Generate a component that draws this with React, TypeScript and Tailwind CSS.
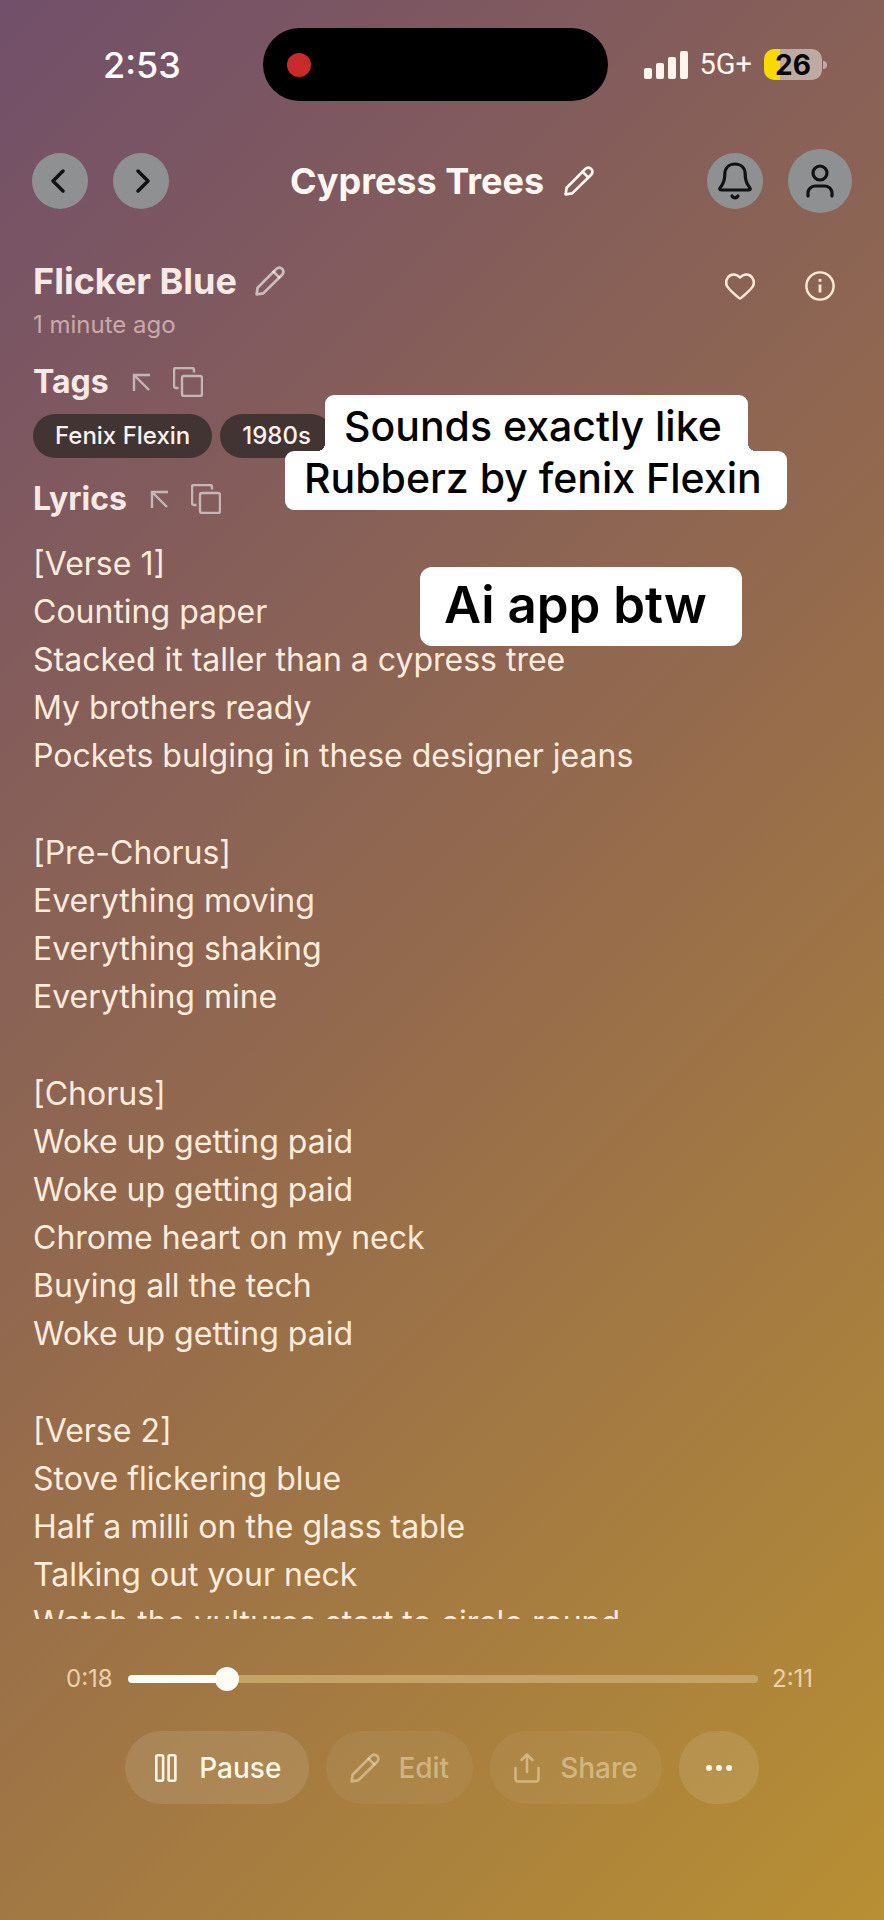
import { useState } from "react";

const STANZAS: string[][] = [
  [
    "[Verse 1]",
    "Counting paper",
    "Stacked it taller than a cypress tree",
    "My brothers ready",
    "Pockets bulging in these designer jeans",
  ],
  ["[Pre-Chorus]", "Everything moving", "Everything shaking", "Everything mine"],
  [
    "[Chorus]",
    "Woke up getting paid",
    "Woke up getting paid",
    "Chrome heart on my neck",
    "Buying all the tech",
    "Woke up getting paid",
  ],
  [
    "[Verse 2]",
    "Stove flickering blue",
    "Half a milli on the glass table",
    "Talking out your neck",
    "Watch the vultures start to circle round",
  ],
];

const TAGS = ["Fenix Flexin", "1980s"];
const DURATION = 131;

function formatTime(seconds: number) {
  const s = Math.floor(seconds);
  return `${Math.floor(s / 60)}:${String(s % 60).padStart(2, "0")}`;
}

function PencilIcon() {
  return (
    <svg viewBox="0 0 30 30" fill="none" stroke="currentColor" strokeWidth="2.7" strokeLinecap="round" strokeLinejoin="round" className="size-[30px]">
      <path d="M1.600 28.400 2.600 21.800 21.400 2.900a4.050 4.050 0 0 1 5.800 0 4.050 4.050 0 0 1 0 5.800L8.200 27.400Z" />
      <path d="m18.600 5.800 5.600 5.600" />
    </svg>
  );
}

function SectionHeading({ title }: { title: string }) {
  return (
    <div className="flex h-8 items-center text-white/55">
      <h3 className="text-[32px] leading-8 font-bold text-[#f6e9e6]">{title}</h3>
      <button aria-label={`Collapse ${title}`} className="ml-[22px]">
        <svg viewBox="0 0 20 20" fill="none" stroke="currentColor" strokeWidth="2.4" className="size-5">
          <path d="M3 19V3h16M3 3l15 15" />
        </svg>
      </button>
      <button aria-label={`Copy ${title}`} className="ml-[22px]">
        <svg viewBox="0 0 30 30" fill="none" stroke="currentColor" strokeWidth="2.4" strokeLinejoin="round" className="size-[30px]">
          <rect x="9" y="9" width="20" height="20" rx="2" />
          <path d="M5.500 21H3a2 2 0 0 1-2-2V3a2 2 0 0 1 2-2h16a2 2 0 0 1 2 2v2.500" />
        </svg>
      </button>
    </div>
  );
}

function StatusBar() {
  return (
    <div className="grid grid-cols-[1fr_345px_1fr] items-center pt-7 pr-[14px]">
      <span className="pl-[103px] text-[36px] leading-none font-medium text-white">2:53</span>
      <div className="flex h-[73px] items-center rounded-full bg-black pl-6">
        <span className="size-6 rounded-full bg-[#cb2a2c]" />
      </div>
      <div className="flex items-center pl-9 text-[#fff5ee]">
        <svg viewBox="0 0 44 28" fill="currentColor" className="h-7 w-11 shrink-0">
          <rect x="0" y="17" width="8" height="11" rx="2" />
          <rect x="12" y="12" width="8" height="16" rx="2" />
          <rect x="24" y="6" width="8" height="22" rx="2" />
          <rect x="36" y="0" width="8" height="28" rx="2" />
        </svg>
        <span className="ml-3 font-['Roboto'] text-[29px] leading-none">5G+</span>
        <span className="ml-3 flex h-[31px] w-[58px] items-center justify-center rounded-[10px] bg-[linear-gradient(90deg,#f8d900_28%,#bfaaa3_28%)] text-[28px] leading-none font-bold text-black">
          26
        </span>
        <span className="ml-px h-2 w-1 rounded-r-full bg-[#bfaaa3]" />
      </div>
    </div>
  );
}

function TopNav() {
  return (
    <nav className="mt-12 grid h-16 grid-cols-[1fr_auto_1fr] items-center px-8 text-[#111111]">
      <div className="flex gap-[25px]">
        <button aria-label="Back" className="grid size-14 place-items-center rounded-full bg-[#8f9092]">
          <svg viewBox="0 0 24 24" fill="none" stroke="currentColor" strokeWidth="3.4" strokeLinecap="round" strokeLinejoin="round" className="size-6">
            <path d="M15 2 5 12l10 10" />
          </svg>
        </button>
        <button aria-label="Forward" className="grid size-14 place-items-center rounded-full bg-[#8f9092]">
          <svg viewBox="0 0 24 24" fill="none" stroke="currentColor" strokeWidth="3.4" strokeLinecap="round" strokeLinejoin="round" className="size-6">
            <path d="m9 2 10 10L9 22" />
          </svg>
        </button>
      </div>
      <div className="flex items-center gap-5 text-[#fff8f2]">
        <h1 className="text-[36px] leading-none font-bold">Cypress Trees</h1>
        <button aria-label="Rename project">
          <PencilIcon />
        </button>
      </div>
      <div className="flex items-center justify-end gap-[25px]">
        <button aria-label="Notifications" className="grid size-14 place-items-center rounded-full bg-[#8f9092]">
          <svg viewBox="0 0 36 38" fill="none" stroke="currentColor" strokeWidth="3.2" strokeLinecap="round" strokeLinejoin="round" className="h-[38px] w-9">
            <path d="M18 2C11.500 2 7.800 6.500 7.800 12.500 7.800 19 6.200 22 3.400 25.500 2.200 27 2.600 28 4.200 28h27.600c1.600 0 2-1 .8-2.500C29.800 22 28.200 19 28.200 12.500 28.200 6.500 24.500 2 18 2Z" />
            <path d="M15 34c1.600 2.400 4.400 2.400 6 0" />
          </svg>
        </button>
        <button aria-label="Account" className="grid size-16 place-items-center rounded-full bg-[#8f9092]">
          <svg viewBox="0 0 28 34" fill="none" stroke="currentColor" strokeWidth="3.2" strokeLinecap="round" className="h-[34px] w-7">
            <circle cx="14" cy="9" r="7" />
            <path d="M2 32v-3a7 7 0 0 1 7-7h10a7 7 0 0 1 7 7v3" />
          </svg>
        </button>
      </div>
    </nav>
  );
}

function Captions() {
  return (
    <div className="pointer-events-none absolute top-[182px] left-[285px] w-[502px] text-black">
      <div className="ml-10 h-[66px] w-[423px] rounded-[9px] bg-white pt-1 pl-[19px] text-[41px] leading-[54px] font-medium whitespace-nowrap">
        Sounds exactly like
      </div>
      <div className="-mt-[10px] h-[59px] rounded-[9px] bg-white pl-[19px] text-[41px] leading-[54px] font-medium whitespace-nowrap">
        Rubberz by fenix Flexin
      </div>
      {/* inner corners where the two lines join */}
      <span className="absolute top-12 left-8 size-2 bg-[radial-gradient(circle_at_0_0,transparent_8px,white_8px)]" />
      <span className="absolute top-12 left-[463px] size-2 bg-[radial-gradient(circle_at_100%_0,transparent_8px,white_8px)]" />
      <div className="mt-[57px] ml-[135px] h-[79px] w-[322px] rounded-xl bg-white pl-6 text-[51px] leading-[75px] font-semibold whitespace-nowrap">
        Ai app btw
      </div>
    </div>
  );
}

function Player() {
  const [position, setPosition] = useState(18.8);

  return (
    <footer className="shrink-0 px-[66px] pt-12 pb-[116px]">
      <div className="flex h-6 items-center gap-[14px] text-2xl text-[#ecd0a8]">
        <span className="w-12">{formatTime(position)}</span>
        <input
          type="range"
          aria-label="Playback position"
          min={0}
          max={DURATION}
          step="any"
          value={position}
          onChange={(e) => setPosition(Number(e.target.value))}
          style={{ "--played": `${(position / DURATION) * 100}%` } as React.CSSProperties}
          className="h-6 min-w-0 flex-1 appearance-none bg-transparent [&::-webkit-slider-runnable-track]:h-2 [&::-webkit-slider-runnable-track]:rounded-full [&::-webkit-slider-runnable-track]:bg-[linear-gradient(90deg,#fffcf5_var(--played),#c4a366_var(--played))] [&::-webkit-slider-thumb]:-mt-2 [&::-webkit-slider-thumb]:size-6 [&::-webkit-slider-thumb]:appearance-none [&::-webkit-slider-thumb]:rounded-full [&::-webkit-slider-thumb]:bg-[#fffcf5]"
        />
        <span className="w-[46px]">{formatTime(DURATION)}</span>
      </div>

      <div className="mt-10 flex justify-center gap-[17px] text-[28px] leading-none font-medium text-[#fff6e6]">
        <button className="flex h-[73px] items-center gap-[22px] rounded-full bg-white/10 pr-7 pl-[30px]">
          <svg viewBox="0 0 22 28" fill="none" stroke="currentColor" strokeWidth="2.6" className="h-7 w-[22px]">
            <rect x="1.300" y="1.300" width="6.800" height="25.400" rx="1.500" />
            <rect x="13.600" y="1.300" width="6.800" height="25.400" rx="1.500" />
          </svg>
          Pause
        </button>
        <button className="flex h-[73px] items-center gap-[18px] rounded-full bg-white/5 px-6 text-[#fff0c8]/45">
          <PencilIcon />
          Edit
        </button>
        <button className="flex h-[73px] items-center gap-5 rounded-full bg-white/5 px-6 text-[#fff0c8]/45">
          <svg viewBox="0 0 26 30" fill="none" stroke="currentColor" strokeWidth="2.5" strokeLinecap="round" strokeLinejoin="round" className="h-[30px] w-[26px]">
            <path d="M1.500 15v11a2.500 2.500 0 0 0 2.500 2.500h18a2.500 2.500 0 0 0 2.500-2.500V15M13 19V1.500M7.500 7 13 1.500 18.500 7" />
          </svg>
          Share
        </button>
        <button aria-label="More" className="grid h-[73px] w-20 place-items-center rounded-full bg-white/10">
          <svg viewBox="0 0 26 6" fill="currentColor" className="h-1.5 w-[26px]">
            <circle cx="3" cy="3" r="3" />
            <circle cx="13" cy="3" r="3" />
            <circle cx="23" cy="3" r="3" />
          </svg>
        </button>
      </div>
    </footer>
  );
}

export default function App() {
  return (
    <div className="flex h-screen flex-col overflow-hidden bg-[linear-gradient(135deg,#724f6a_0%,#946a4d_50%,#b88f33_100%)] font-['Inter',sans-serif]">
      <StatusBar />
      <TopNav />

      <main className="relative min-h-0 flex-1">
        <div className="h-full overflow-hidden pt-[50px] pr-8 pl-[33px]">
          <header className="flex items-start justify-between">
            <div>
              <div className="flex items-center gap-[18px] text-white/60">
                <h2 className="text-[36px] leading-9 font-bold text-[#f6e9e6]">Flicker Blue</h2>
                <button aria-label="Rename song">
                  <PencilIcon />
                </button>
              </div>
              <p className="mt-[14px] text-2xl leading-6 text-[#c9a9aa]">1 minute ago</p>
            </div>
            <div className="mt-2 mr-[17px] flex gap-[50px] text-[#ffead8]">
              <button aria-label="Like">
                <svg viewBox="0 0 30 30" fill="none" stroke="currentColor" strokeWidth="2.6" strokeLinejoin="round" className="size-[30px]">
                  <path d="M15 27.500C14 27.500 3.500 18 2 15 .2 11.500 1.500 6.500 5 4.500c3.500-2 7.500-.8 10 2 2.500-2.800 6.500-4 10-2 3.500 2 4.800 7 3 10.500-1.500 3-12 12.500-13 12.500Z" />
                </svg>
              </button>
              <button aria-label="Song info">
                <svg viewBox="0 0 30 30" fill="none" stroke="currentColor" strokeWidth="2.4" className="size-[30px]">
                  <circle cx="15" cy="15" r="13.600" />
                  <path d="M15 13.500v8M15 8v2.800" strokeWidth="2.8" />
                </svg>
              </button>
            </div>
          </header>

          <section className="mt-[29px]">
            <SectionHeading title="Tags" />
            <ul className="mt-4 flex gap-2">
              {TAGS.map((tag) => (
                <li key={tag} className="flex h-11 items-center rounded-full bg-[#433434] px-[22px] text-2xl font-medium text-[#fbf3f1]">
                  {tag}
                </li>
              ))}
            </ul>
          </section>

          <section className="mt-[25px]">
            <SectionHeading title="Lyrics" />
            <div className="mt-[25px] flex flex-col gap-[49px] text-[32px] leading-[48px] text-[#fdebdc]">
              {STANZAS.map((lines, i) => (
                <div key={i}>
                  {lines.map((line, j) => (
                    <p key={j} className="whitespace-nowrap">{line}</p>
                  ))}
                </div>
              ))}
            </div>
          </section>
        </div>

        <Captions />
      </main>

      <Player />
    </div>
  );
}
